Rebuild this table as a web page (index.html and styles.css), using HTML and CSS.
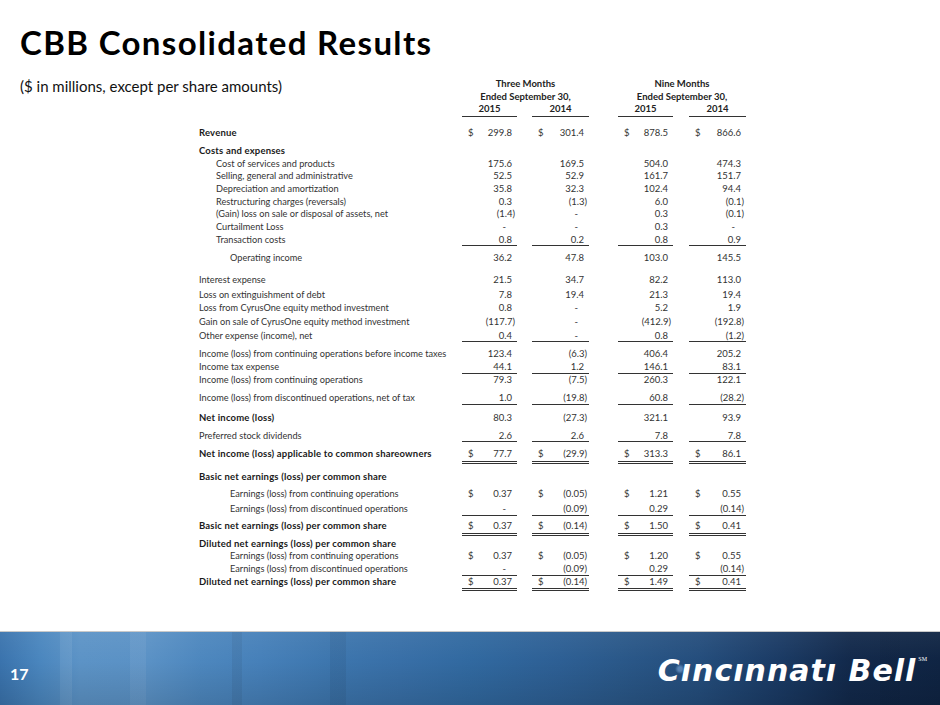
FILE: index.html
```html
<!DOCTYPE html>
<html lang="en">
<head>
<meta charset="utf-8">
<title>CBB Consolidated Results</title>
<link rel="stylesheet" href="styles.css">
</head>
<body>
<div class="slide">
  <h1 class="title">CBB Consolidated Results</h1>
  <main class="main">
    <div class="thead">
      <p class="sub">($ in millions, except per share amounts)</p>
      <div class="grp g1">
        <div>Three Months</div>
        <div>Ended September 30,</div>
        <div class="years"><span class="yr w55">2015</span><span class="yr w57">2014</span></div>
      </div>
      <div class="grp g2">
        <div>Nine Months</div>
        <div>Ended September 30,</div>
        <div class="years"><span class="yr w55">2015</span><span class="yr w57">2014</span></div>
      </div>
    </div>
    <div class="tbody">
      <div class="r bold"><span class="l">Revenue</span><span class="c c1"><span>$</span><span class="v">299.8</span></span><span class="c c2"><span>$</span><span class="v">301.4</span></span><span class="c c3"><span>$</span><span class="v">878.5</span></span><span class="c c4"><span>$</span><span class="v">866.6</span></span></div>
      <div class="r bold m6"><span class="l">Costs and expenses</span></div>
      <div class="r"><span class="l i1">Cost of services and products</span><span class="c c1"><span class="v">175.6</span></span><span class="c c2"><span class="v">169.5</span></span><span class="c c3"><span class="v">504.0</span></span><span class="c c4"><span class="v">474.3</span></span></div>
      <div class="r"><span class="l i1">Selling, general and administrative</span><span class="c c1"><span class="v">52.5</span></span><span class="c c2"><span class="v">52.9</span></span><span class="c c3"><span class="v">161.7</span></span><span class="c c4"><span class="v">151.7</span></span></div>
      <div class="r"><span class="l i1">Depreciation and amortization</span><span class="c c1"><span class="v">35.8</span></span><span class="c c2"><span class="v">32.3</span></span><span class="c c3"><span class="v">102.4</span></span><span class="c c4"><span class="v">94.4</span></span></div>
      <div class="r"><span class="l i1">Restructuring charges (reversals)</span><span class="c c1"><span class="v">0.3</span></span><span class="c c2"><span class="v n">(1.3)</span></span><span class="c c3"><span class="v">6.0</span></span><span class="c c4"><span class="v n">(0.1)</span></span></div>
      <div class="r"><span class="l i1">(Gain) loss on sale or disposal of assets, net</span><span class="c c1"><span class="v n">(1.4)</span></span><span class="c c2"><span class="v z">-</span></span><span class="c c3"><span class="v">0.3</span></span><span class="c c4"><span class="v n">(0.1)</span></span></div>
      <div class="r"><span class="l i1">Curtailment Loss</span><span class="c c1"><span class="v z">-</span></span><span class="c c2"><span class="v z">-</span></span><span class="c c3"><span class="v">0.3</span></span><span class="c c4"><span class="v z">-</span></span></div>
      <div class="r ul"><span class="l i1">Transaction costs</span><span class="c c1"><span class="v">0.8</span></span><span class="c c2"><span class="v">0.2</span></span><span class="c c3"><span class="v">0.8</span></span><span class="c c4"><span class="v">0.9</span></span></div>
      <div class="r m6"><span class="l i2">Operating income</span><span class="c c1"><span class="v">36.2</span></span><span class="c c2"><span class="v">47.8</span></span><span class="c c3"><span class="v">103.0</span></span><span class="c c4"><span class="v">145.5</span></span></div>
      <div class="r m9"><span class="l">Interest expense</span><span class="c c1"><span class="v">21.5</span></span><span class="c c2"><span class="v">34.7</span></span><span class="c c3"><span class="v">82.2</span></span><span class="c c4"><span class="v">113.0</span></span></div>
      <div class="r m2"><span class="l">Loss on extinguishment of debt</span><span class="c c1"><span class="v">7.8</span></span><span class="c c2"><span class="v">19.4</span></span><span class="c c3"><span class="v">21.3</span></span><span class="c c4"><span class="v">19.4</span></span></div>
      <div class="r m1"><span class="l">Loss from CyrusOne equity method investment</span><span class="c c1"><span class="v">0.8</span></span><span class="c c2"><span class="v z">-</span></span><span class="c c3"><span class="v">5.2</span></span><span class="c c4"><span class="v">1.9</span></span></div>
      <div class="r m1"><span class="l">Gain on sale of CyrusOne equity method investment</span><span class="c c1"><span class="v n">(117.7)</span></span><span class="c c2"><span class="v z">-</span></span><span class="c c3"><span class="v n">(412.9)</span></span><span class="c c4"><span class="v n">(192.8)</span></span></div>
      <div class="r m1 ul"><span class="l">Other expense (income), net</span><span class="c c1"><span class="v">0.4</span></span><span class="c c2"><span class="v z">-</span></span><span class="c c3"><span class="v">0.8</span></span><span class="c c4"><span class="v n">(1.2)</span></span></div>
      <div class="r m6"><span class="l">Income (loss) from continuing operations before income taxes</span><span class="c c1"><span class="v">123.4</span></span><span class="c c2"><span class="v n">(6.3)</span></span><span class="c c3"><span class="v">406.4</span></span><span class="c c4"><span class="v">205.2</span></span></div>
      <div class="r ul"><span class="l">Income tax expense</span><span class="c c1"><span class="v">44.1</span></span><span class="c c2"><span class="v">1.2</span></span><span class="c c3"><span class="v">146.1</span></span><span class="c c4"><span class="v">83.1</span></span></div>
      <div class="r"><span class="l">Income (loss) from continuing operations</span><span class="c c1"><span class="v">79.3</span></span><span class="c c2"><span class="v n">(7.5)</span></span><span class="c c3"><span class="v">260.3</span></span><span class="c c4"><span class="v">122.1</span></span></div>
      <div class="r m6 ul"><span class="l">Income (loss) from discontinued operations, net of tax</span><span class="c c1"><span class="v">1.0</span></span><span class="c c2"><span class="v n">(19.8)</span></span><span class="c c3"><span class="v">60.8</span></span><span class="c c4"><span class="v n">(28.2)</span></span></div>
      <div class="r m7 bold"><span class="l">Net income (loss)</span><span class="c c1"><span class="v">80.3</span></span><span class="c c2"><span class="v n">(27.3)</span></span><span class="c c3"><span class="v">321.1</span></span><span class="c c4"><span class="v">93.9</span></span></div>
      <div class="r m5 ul"><span class="l">Preferred stock dividends</span><span class="c c1"><span class="v">2.6</span></span><span class="c c2"><span class="v">2.6</span></span><span class="c c3"><span class="v">7.8</span></span><span class="c c4"><span class="v">7.8</span></span></div>
      <div class="r m6 bold dl"><span class="l">Net income (loss) applicable to common shareowners</span><span class="c c1"><span>$</span><span class="v">77.7</span></span><span class="c c2"><span>$</span><span class="v n">(29.9)</span></span><span class="c c3"><span>$</span><span class="v">313.3</span></span><span class="c c4"><span>$</span><span class="v">86.1</span></span></div>
      <div class="r m7 bold"><span class="l">Basic net earnings (loss) per common share</span></div>
      <div class="r m4"><span class="l i2">Earnings (loss) from continuing operations</span><span class="c c1"><span>$</span><span class="v">0.37</span></span><span class="c c2"><span>$</span><span class="v n">(0.05)</span></span><span class="c c3"><span>$</span><span class="v">1.21</span></span><span class="c c4"><span>$</span><span class="v">0.55</span></span></div>
      <div class="r m3 ul"><span class="l i2">Earnings (loss) from discontinued operations</span><span class="c c1"><span class="v z">-</span></span><span class="c c2"><span class="v n">(0.09)</span></span><span class="c c3"><span class="v">0.29</span></span><span class="c c4"><span class="v n">(0.14)</span></span></div>
      <div class="r m4 bold dl"><span class="l">Basic net earnings (loss) per common share</span><span class="c c1"><span>$</span><span class="v">0.37</span></span><span class="c c2"><span>$</span><span class="v n">(0.14)</span></span><span class="c c3"><span>$</span><span class="v">1.50</span></span><span class="c c4"><span>$</span><span class="v">0.41</span></span></div>
      <div class="r m2 bold"><span class="l">Diluted net earnings (loss) per common share</span></div>
      <div class="r"><span class="l i2">Earnings (loss) from continuing operations</span><span class="c c1"><span>$</span><span class="v">0.37</span></span><span class="c c2"><span>$</span><span class="v n">(0.05)</span></span><span class="c c3"><span>$</span><span class="v">1.20</span></span><span class="c c4"><span>$</span><span class="v">0.55</span></span></div>
      <div class="r ul"><span class="l i2">Earnings (loss) from discontinued operations</span><span class="c c1"><span class="v z">-</span></span><span class="c c2"><span class="v n">(0.09)</span></span><span class="c c3"><span class="v">0.29</span></span><span class="c c4"><span class="v n">(0.14)</span></span></div>
      <div class="r bold dl"><span class="l">Diluted net earnings (loss) per common share</span><span class="c c1"><span>$</span><span class="v">0.37</span></span><span class="c c2"><span>$</span><span class="v n">(0.14)</span></span><span class="c c3"><span>$</span><span class="v">1.49</span></span><span class="c c4"><span>$</span><span class="v">0.41</span></span></div>
    </div>
  </main>
  <footer class="foot">
    <span class="pg">17</span>
    <span class="logo">Cıncınnatı Bell<span class="sm">SM</span></span>
  </footer>
</div>
</body>
</html>
```
FILE: styles.css
```css
* { box-sizing: border-box; }
html, body { margin: 0; padding: 0; }
body { background: #fff; font-family: Lato, "Open Sans", sans-serif; }

.slide {
  width: 940px;
  height: 705px;
  display: flex;
  flex-direction: column;
  overflow: hidden;
}

.title {
  margin: 0;
  padding: 22px 0 0 20px;
  font-size: 33px;
  line-height: 40px;
  font-weight: 700;
  letter-spacing: 1.35px;
  color: #000;
}

.main { flex: 1; }

.thead {
  display: flex;
  align-items: flex-start;
  margin-top: 16px;
  padding-left: 20px;
}
.sub {
  width: 442px;
  margin: -1px 0 0 0;
  font-size: 15px;
  line-height: 18px;
  color: #111;
}
.grp {
  font-size: 9.5px;
  font-weight: 700;
  line-height: 12.5px;
  text-align: center;
  color: #222;
}
.g1 { width: 127px; }
.g2 { width: 128px; margin-left: 29px; }
.years { display: flex; justify-content: space-between; }
.yr { border-bottom: 1px solid #333; }
.w55 { width: 55px; }
.w57 { width: 57px; }

.tbody {
  margin-top: 10px;
  padding-left: 199px;
  font-size: 9.5px;
  color: #333;
}
.r {
  display: flex;
  height: 12.67px;
  line-height: 12.67px;
  white-space: nowrap;
}
.l { width: 263px; flex: none; font-size: 9.2px; }
.bold .l { font-weight: 700; font-size: 9.5px; letter-spacing: 0.18px; color: #1a1a1a; }
.i1 { padding-left: 17px; }
.i2 { padding-left: 31px; }

.c {
  display: flex;
  flex: none;
  padding-left: 6px;
}
.c1 { width: 55px; }
.c2 { width: 57px; margin-left: 15px; }
.c3 { width: 55px; margin-left: 29px; }
.c4 { width: 57px; margin-left: 16px; }
.v { margin-left: auto; padding-right: 5px; }
.v.n { padding-right: 2px; }
.v.z { padding-right: 11px; }

.ul .c { border-bottom: 1px solid #333; }
.r.dl { height: 15.67px; }
.dl .c { border-bottom: 3px double #333; }

.m1 { margin-top: 1px; }
.m2 { margin-top: 2px; }
.m3 { margin-top: 3px; }
.m4 { margin-top: 4px; }
.m5 { margin-top: 5px; }
.m6 { margin-top: 6px; }
.m7 { margin-top: 7px; }
.m9 { margin-top: 9px; }

.foot {
  flex: none;
  height: 74px;
  border-top: 1px solid #c9c9c9;
  display: flex;
  align-items: center;
  padding: 0 13px 0 10px;
  color: #fff;
  background:
    radial-gradient(circle at 680px 37px, rgba(130,175,225,0.55) 0 2px, rgba(130,175,225,0) 5px),
    linear-gradient(180deg, rgba(255,255,255,0.05) 0%, rgba(0,0,0,0) 40%, rgba(0,0,0,0.12) 100%),
    linear-gradient(90deg, rgba(0,0,0,0) 0 60px, rgba(255,255,255,0.07) 60px 72px, rgba(0,0,0,0) 72px 130px, rgba(255,255,255,0.06) 130px 146px, rgba(0,0,0,0) 146px 232px, rgba(0,0,0,0.06) 232px 242px, rgba(0,0,0,0) 242px 330px, rgba(0,0,0,0.06) 330px 346px, rgba(0,0,0,0) 346px 880px, rgba(0,0,0,0.05) 880px 900px, rgba(0,0,0,0) 900px),
    linear-gradient(90deg, #3a73ad 0px, #4a86be 40px, #5c93c6 80px, #5a91c5 150px, #4d87be 200px, #4680b9 260px, #3d76ae 330px, #386fa7 400px, #3169a0 470px, #2d5f94 560px, #2a5889 620px, #244d7c 700px, #1a3a64 780px, #12294b 850px, #0f2443 940px);
}
.pg {
  font-weight: 700;
  font-size: 16px;
  padding-top: 9px;
}
.logo {
  margin-left: auto;
  padding-top: 4px;
  font-family: "DejaVu Sans", sans-serif;
  font-weight: 700;
  font-style: italic;
  font-size: 30px;
  letter-spacing: 1px;
  line-height: 1;
  white-space: nowrap;
}
.sm {
  font-family: "Liberation Serif", serif;
  font-size: 6px;
  font-style: normal;
  font-weight: 400;
  letter-spacing: 0;
  vertical-align: top;
  margin-left: 2px;
}
```
